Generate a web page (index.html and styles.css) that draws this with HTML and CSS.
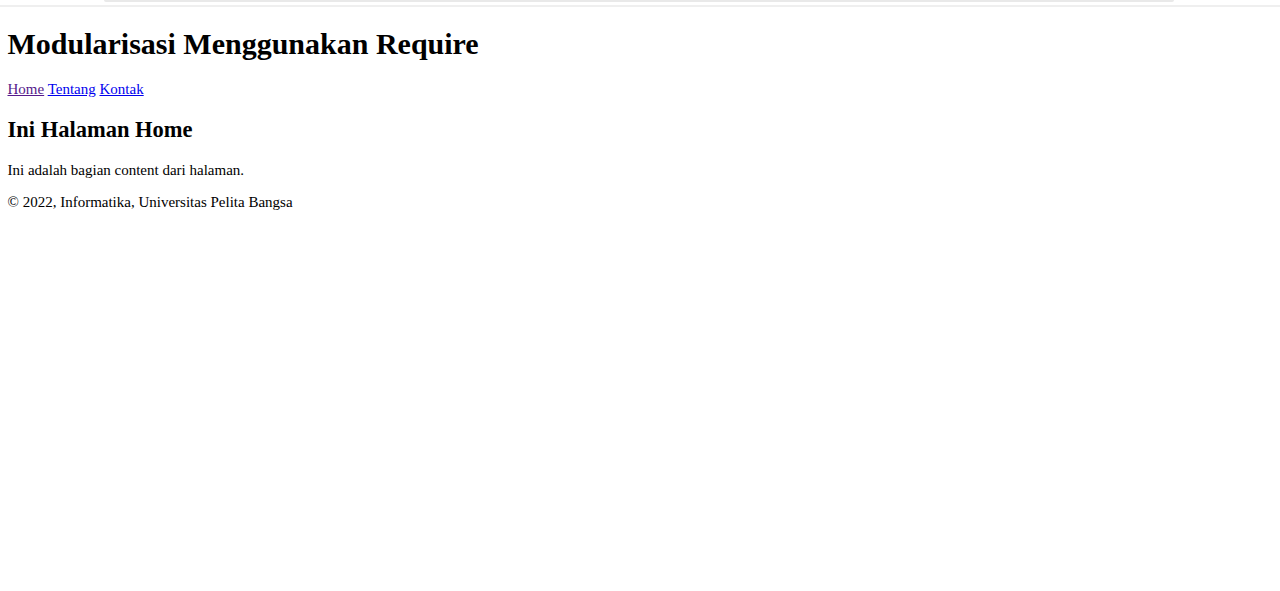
FILE: index.html
```html
<!DOCTYPE html>
<html lang="id">
<head>
<meta charset="utf-8">
<title>Modularisasi Menggunakan Require</title>
<link rel="stylesheet" href="styles.css">
</head>
<body>
<div class="chrome"><div class="chrome-bar"></div></div>
<div class="page">
  <h1>Modularisasi Menggunakan Require</h1>
  <nav class="nav">
    <a href="#" class="visited">Home</a>
    <a href="#">Tentang</a>
    <a href="#">Kontak</a>
  </nav>
  <h2>Ini Halaman Home</h2>
  <p>Ini adalah bagian content dari halaman.</p>
  <footer class="footer"><p>&copy; 2022, Informatika, Universitas Pelita Bangsa</p></footer>
</div>
</body>
</html>
```
FILE: styles.css
```css
html, body {
  margin: 0;
  background: #ffffff;
}
body {
  font-family: "Liberation Serif", "Times New Roman", serif;
  font-size: 15px;
  color: #000;
}
.chrome {
  height: 5px;
  border-bottom: 2px solid #efefef;
  display: flex;
  justify-content: flex-start;
  padding-left: 104px;
}
.chrome-bar {
  width: 1070px;
  height: 2px;
  background: #e9e9e9;
  border-radius: 0 0 6px 6px;
}
.page {
  margin: 7.5px;
}
h1 {
  font-size: 2em;
  margin: 0.67em 0;
}
h2 {
  font-size: 1.5em;
  margin: 0.83em 0;
}
p {
  margin: 1em 0;
}
.nav a {
  color: #0000ee;
}
.nav a.visited {
  color: #551a8b;
}
```
